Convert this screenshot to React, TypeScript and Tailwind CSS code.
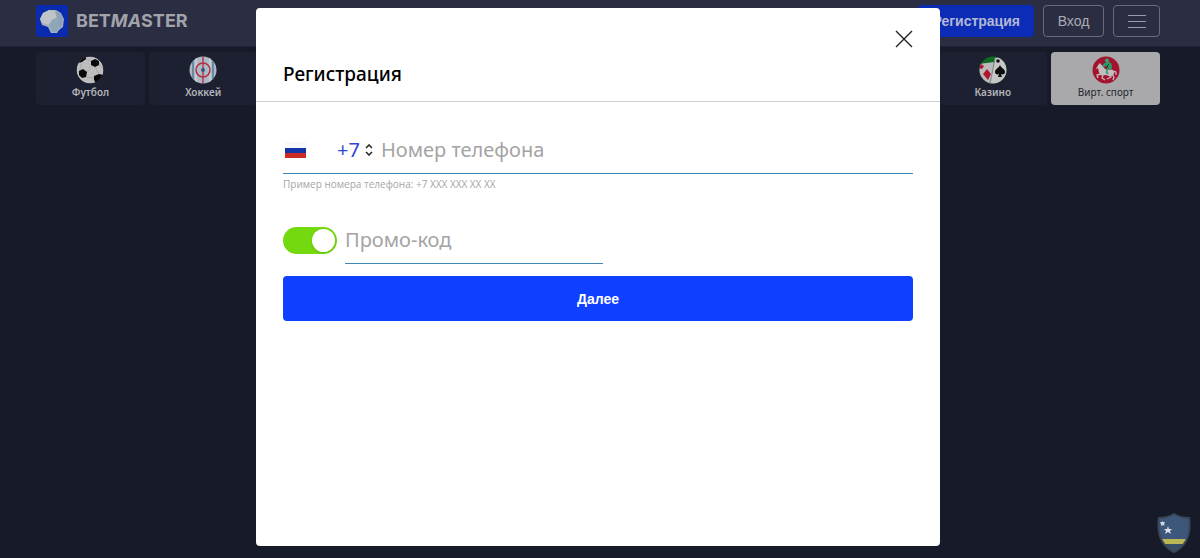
import { useState } from "react";

function LogoMark() {
  return (
    <svg viewBox="0 0 32 32" className="w-8 h-8" aria-hidden="true">
      <rect width="32" height="32" rx="3" fill="#0a2bb0" />
      <path d="M4 14l3-6 6-3 7 0 5 3 3 6-1 8-4 3-2 3-6 0-3-6-6-2z" fill="#a3b0c0" />
      <path d="M4 14l3-6 6-3 6 1 2 6-5 3-3 5-7-2z" fill="#bfc4c6" />
      <path d="M13 20l3-5 5-2 2 8-2 6-5 0z" fill="#8fa8b8" />
      <path d="M21 13l-2-7 5 2 3 5-1 8-3 2z" fill="#8fa0b8" />
    </svg>
  );
}

function FootballIcon() {
  return (
    <svg viewBox="0 0 28 28" className="w-7 h-7" aria-hidden="true">
      <clipPath id="football">
        <circle cx="14" cy="14" r="13.5" />
      </clipPath>
      <g clipPath="url(#football)">
        <circle cx="14" cy="14" r="13.5" fill="#bdbdbd" />
        <g fill="#08080a">
          <path d="M15 5l4-2 4 2 0 4-4 2-4-2z" />
          <path d="M3 15l4-2 4 3-1 5-4 1-3-3z" />
          <path d="M18 20l5-2 4 1-2 6-5 2-2-3z" />
          <path d="M3 7l2-4 5-3 0 3-4 3z" />
        </g>
        <path
          d="M10 3l5 2M19 11l4 7M11 16l5-6M10 21l8 1M23 9l4 3M4 14l1-6"
          stroke="#9b9b9b"
          strokeWidth=".6"
          fill="none"
        />
      </g>
    </svg>
  );
}

function HockeyIcon() {
  return (
    <svg viewBox="0 0 28 28" className="w-7 h-7" aria-hidden="true">
      <clipPath id="hockey">
        <circle cx="14" cy="14" r="13.5" />
      </clipPath>
      <g clipPath="url(#hockey)">
        <rect width="28" height="28" fill="#adb9c4" />
        <path d="M4 0v28M24 0v28" stroke="#547f9d" strokeWidth="1.6" />
        <path d="M7 0v28M21 0v28" stroke="#c6cbd0" strokeWidth="2" />
        <path d="M14 0v28" stroke="#b23346" strokeWidth="1.4" />
        <circle cx="14" cy="14" r="7" fill="none" stroke="#b52e40" strokeWidth="1.5" />
        <circle cx="14" cy="14" r="2" fill="#315b80" />
      </g>
    </svg>
  );
}

function CasinoIcon() {
  return (
    <svg viewBox="0 0 28 28" className="w-7 h-7" aria-hidden="true">
      <clipPath id="casino">
        <circle cx="14" cy="14" r="13.5" />
      </clipPath>
      <g clipPath="url(#casino)">
        <rect width="28" height="28" fill="#0b6b20" />
        <path d="M0 8l15-2-3 22H0z" fill="#bababa" />
        <path d="M16 2l12-2v28H11z" fill="#c6c6c6" />
        <path d="M16 2l-5 26" stroke="#777" strokeWidth=".8" />
        <path d="M8 13l4 5-3 6-5-6z" fill="#b31530" />
        <path d="M2 8l3 2-2 3-3-1z" fill="#b31530" />
        <circle cx="19" cy="5" r="1.8" fill="#111" />
        <path
          d="M21 9c1 3 5 4 5 7 0 2-2 3-4 2l1 3h-4l1-3c-2 1-4 0-4-2 0-3 4-4 5-7z"
          fill="#0b0b0c"
        />
      </g>
    </svg>
  );
}

function RacingIcon() {
  return (
    <svg viewBox="0 0 28 28" className="w-7 h-7" aria-hidden="true">
      <circle cx="14" cy="14" r="13.5" fill="#a3122f" />
      <path
        d="M4 12.5L7 8l1-1 1 1.5c2 1 3 4 5 5h5c2 0 3 1 3.500 3l-1.500 3-3 1-4-1.500-5 .5-2-3-1-4.500-2 1z"
        fill="#c3bdbd"
      />
      <path
        d="M9 18l-4 1 1 3M11 19l-1 3 3 2M18 19l1 2-4 2M20 18l2 3-1 3M22 15l2 1v3"
        fill="none"
        stroke="#c3bdbd"
        strokeWidth="1.3"
        strokeLinejoin="round"
      />
      <path d="M12.500 7l4-1.500 3 2 .5 5-3 1.500-2-1 0-3-4 1-1-1z" fill="#2a9a67" />
      <path d="M15.500 13l-1 3 1.500 2" stroke="#2a9a67" strokeWidth="1.5" fill="none" />
      <circle cx="15" cy="4.500" r="2" fill="#35a575" />
      <path d="M17 8l-2 2 1 2" stroke="#153d2a" strokeWidth="1" fill="none" />
    </svg>
  );
}

function RussiaFlag() {
  return (
    <svg viewBox="0 0 21 16" className="w-[21px] h-4" aria-hidden="true">
      <rect width="21" height="16" fill="#f9f9f9" />
      <rect y="6" width="21" height="5" fill="#1236a5" />
      <rect y="11" width="21" height="5" fill="#cd2b26" />
    </svg>
  );
}

function CuracaoShield() {
  return (
    <svg viewBox="0 0 36 42" className="w-9 h-[42px]" aria-hidden="true">
      <clipPath id="shield">
        <path d="M18 2c5 3 10 4 15 4 2 14-1 27-15 34C4 33 1 20 3 6c5 0 10-1 15-4z" />
      </clipPath>
      <g clipPath="url(#shield)">
        <rect width="36" height="42" fill="#3d577b" />
        <rect y="27" width="36" height="5" fill="#b9b653" />
        <rect y="32" width="36" height="10" fill="#364f66" />
      </g>
      <path
        d="M18 2c5 3 10 4 15 4 2 14-1 27-15 34C4 33 1 20 3 6c5 0 10-1 15-4z"
        fill="none"
        stroke="#3c4657"
        strokeWidth="2"
      />
      <path d="M6 9l1 1h2l-1 2 1 2-2-1-2 1 0-2-1-2h2z" fill="#cdd8e2" />
      <path d="M12 14l1 3h3l-2 2 1 3-3-2-3 2 1-3-2-2h3z" fill="#d8dfe6" />
    </svg>
  );
}

const sports = [
  { name: "Футбол", icon: <FootballIcon />, style: "bg-[#1d2031] text-[#b3b4ba] font-semibold" },
  { name: "Хоккей", icon: <HockeyIcon />, style: "bg-[#1d2031] text-[#b3b4ba] font-semibold" },
  { name: "Казино", icon: <CasinoIcon />, style: "bg-[#1d2031] text-[#b3b4ba] font-semibold col-start-9" },
  { name: "Вирт. спорт", icon: <RacingIcon />, style: "bg-[#a9a9ab] text-[#25262d] font-normal" },
];

export default function App() {
  const [phone, setPhone] = useState("");
  const [promo, setPromo] = useState("");
  const [hasPromo, setHasPromo] = useState(true);

  return (
    <div className="min-h-screen bg-[#171a29] font-['Noto_Sans',sans-serif]">
      <header className="bg-[#2b2e43] border-b border-[#1f2234]">
        <div className="flex items-center h-[46px] pl-9 pr-10 pb-1">
          <a href="#" className="flex items-center gap-2">
            <LogoMark />
            <span className="font-['Inter',sans-serif] font-bold text-lg leading-none text-[#a2a3aa]">
              BET<span className="italic">MA</span>STER
            </span>
          </a>
          <div className="flex gap-[9px] ml-auto font-['Liberation_Sans',sans-serif] text-sm">
            <button className="h-8 px-[14px] rounded bg-[#0d2cb5] font-bold text-[#b2b9d5]">
              Регистрация
            </button>
            <button className="h-8 w-[61px] rounded border border-[#696b7a] text-[#aaabb2]">
              Вход
            </button>
            <button
              aria-label="Меню"
              className="flex items-center justify-center h-8 w-[47px] rounded border border-[#696b7a]"
            >
              <svg viewBox="0 0 18 14" className="w-[18px] h-[14px]" stroke="#9a9ba5">
                <path d="M0 1.5h18M0 7.5h18M0 13.5h18" />
              </svg>
            </button>
          </div>
        </div>
      </header>

      <nav className="grid grid-cols-10 gap-1 pl-9 pr-10 pt-[5px]">
        {sports.map((sport) => (
          <a
            key={sport.name}
            href="#"
            className={`flex flex-col items-center h-[53px] pt-1 rounded text-[10px] leading-4 ${sport.style}`}
          >
            {sport.icon}
            {sport.name}
          </a>
        ))}
      </nav>

      <div className="fixed right-2 bottom-1">
        <CuracaoShield />
      </div>

      {/* Registration dialog */}
      <div className="fixed inset-0 flex justify-center pt-2 pb-3 pr-1">
        <div
          role="dialog"
          aria-labelledby="dialog-title"
          className="w-full max-w-[684px] rounded bg-white overflow-auto"
        >
          <div className="flex flex-col h-[94px] px-[27px] pt-[22px] border-b border-[#cfcfd2]">
            <button aria-label="Закрыть" className="self-end">
              <svg viewBox="0 0 18 18" className="w-[18px] h-[18px]" stroke="#222" strokeWidth="1.4">
                <path d="M1 1l16 16M17 1L1 17" />
              </svg>
            </button>
            <h1 id="dialog-title" className="mt-3 text-[19px] leading-7 font-medium text-black">
              Регистрация
            </h1>
          </div>

          <form className="px-[27px] pt-6" onSubmit={(e) => e.preventDefault()}>
            <div className="flex items-center h-12 border-b border-[#3f86b5]">
              <div className="flex items-center w-[98px] pl-[2px]">
                <RussiaFlag />
                <select
                  aria-label="Код страны"
                  className="w-6 ml-auto mr-1 appearance-none bg-transparent text-xl text-[#3346d8] outline-none"
                >
                  <option>+7</option>
                </select>
                <svg viewBox="0 0 8 12" className="w-2 h-3 mr-2" fill="none" stroke="#222" strokeWidth="1.5">
                  <path d="M1 4l3-3 3 3M1 8l3 3 3-3" />
                </svg>
              </div>
              <input
                type="tel"
                aria-label="Номер телефона"
                aria-describedby="phone-hint"
                placeholder="Номер телефона"
                value={phone}
                onChange={(e) => setPhone(e.target.value)}
                className="flex-1 min-w-0 text-xl outline-none placeholder-[#a4a4a4]"
              />
            </div>
            <p id="phone-hint" className="mt-[2px] font-['Open_Sans',sans-serif] text-[10px] leading-4 text-[#a5a5a5]">
              Пример номера телефона: +7 XXX XXX XX XX
            </p>

            <div className="flex items-center gap-2 mt-6">
              <input
                type="checkbox"
                role="switch"
                aria-label="Использовать промо-код"
                checked={hasPromo}
                onChange={(e) => setHasPromo(e.target.checked)}
                className="flex items-center w-[54px] h-[27px] px-[2px] appearance-none rounded-full bg-gray-300 checked:bg-[#74d90f] checked:justify-end before:w-[23px] before:h-[23px] before:rounded-full before:bg-white before:shadow"
              />
              <input
                type="text"
                aria-label="Промо-код"
                placeholder="Промо-код"
                value={promo}
                onChange={(e) => setPromo(e.target.value)}
                className="w-[258px] h-12 border-b border-[#3f86b5] text-xl outline-none placeholder-[#a4a4a4]"
              />
            </div>

            <button
              type="submit"
              className="w-full h-[45px] mt-3 rounded bg-[#1040ff] font-['Liberation_Sans',sans-serif] text-sm font-bold text-white"
            >
              Далее
            </button>
          </form>
        </div>
      </div>
    </div>
  );
}
